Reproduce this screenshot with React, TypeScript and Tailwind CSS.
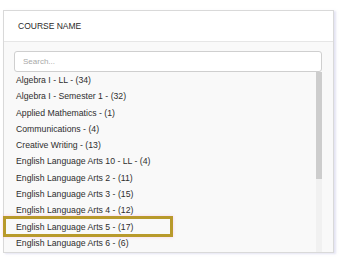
const courses = [
  "Algebra I - LL - (34)",
  "Algebra I - Semester 1 - (32)",
  "Applied Mathematics - (1)",
  "Communications - (4)",
  "Creative Writing - (13)",
  "English Language Arts 10 - LL - (4)",
  "English Language Arts 2 - (11)",
  "English Language Arts 3 - (15)",
  "English Language Arts 4 - (12)",
  "English Language Arts 5 - (17)",
  "English Language Arts 6 - (6)",
];

export default function App() {
  return (
    <div className="relative h-[262px] w-[343px] overflow-hidden bg-white pl-[3px] pt-[10px] font-['Liberation_Sans',Arial,sans-serif] text-[#333]">
      <div className="flex h-[243px] w-[331px] flex-col overflow-hidden border border-[#d9d9d9] bg-[#f9f9f9] shadow-[2px_1px_2px_rgba(200,200,230,0.5)]">
        <div className="flex h-[31px] shrink-0 items-center border-b border-[#e6e6e6] bg-white pl-[14px] text-[8.5px] text-[#2a2a2a]">
          COURSE NAME
        </div>
        <div className="flex min-h-0 flex-1 flex-col pl-[10px] pr-[11px] pt-[9px]">
          <div className="flex h-[21px] shrink-0 items-center rounded-[3px] border border-[#cfcfcf] bg-white pl-[8px] text-[8px] text-[#a8a8a8]">
            Search...
          </div>
          <div className="flex min-h-0 flex-1">
            <div className="flex-1 overflow-hidden pl-[2px] text-[8.7px]">
              {courses.map((c) => (
                <div key={c} className="h-[16.3px] whitespace-nowrap leading-[16.3px] text-[#2e2e2e]">
                  {c}
                </div>
              ))}
            </div>
            <div className="w-[6px] bg-[#f1f1f1]">
              <div className="h-[107px] w-[6px] bg-[#cdcdcd]" />
            </div>
          </div>
        </div>
      </div>
      <div className="absolute left-[3px] top-[216px] h-[21px] w-[170px] border-[3px] border-[#b89a2c] shadow-[0_0_3px_rgba(255,180,220,0.6)]" />
    </div>
  );
}
